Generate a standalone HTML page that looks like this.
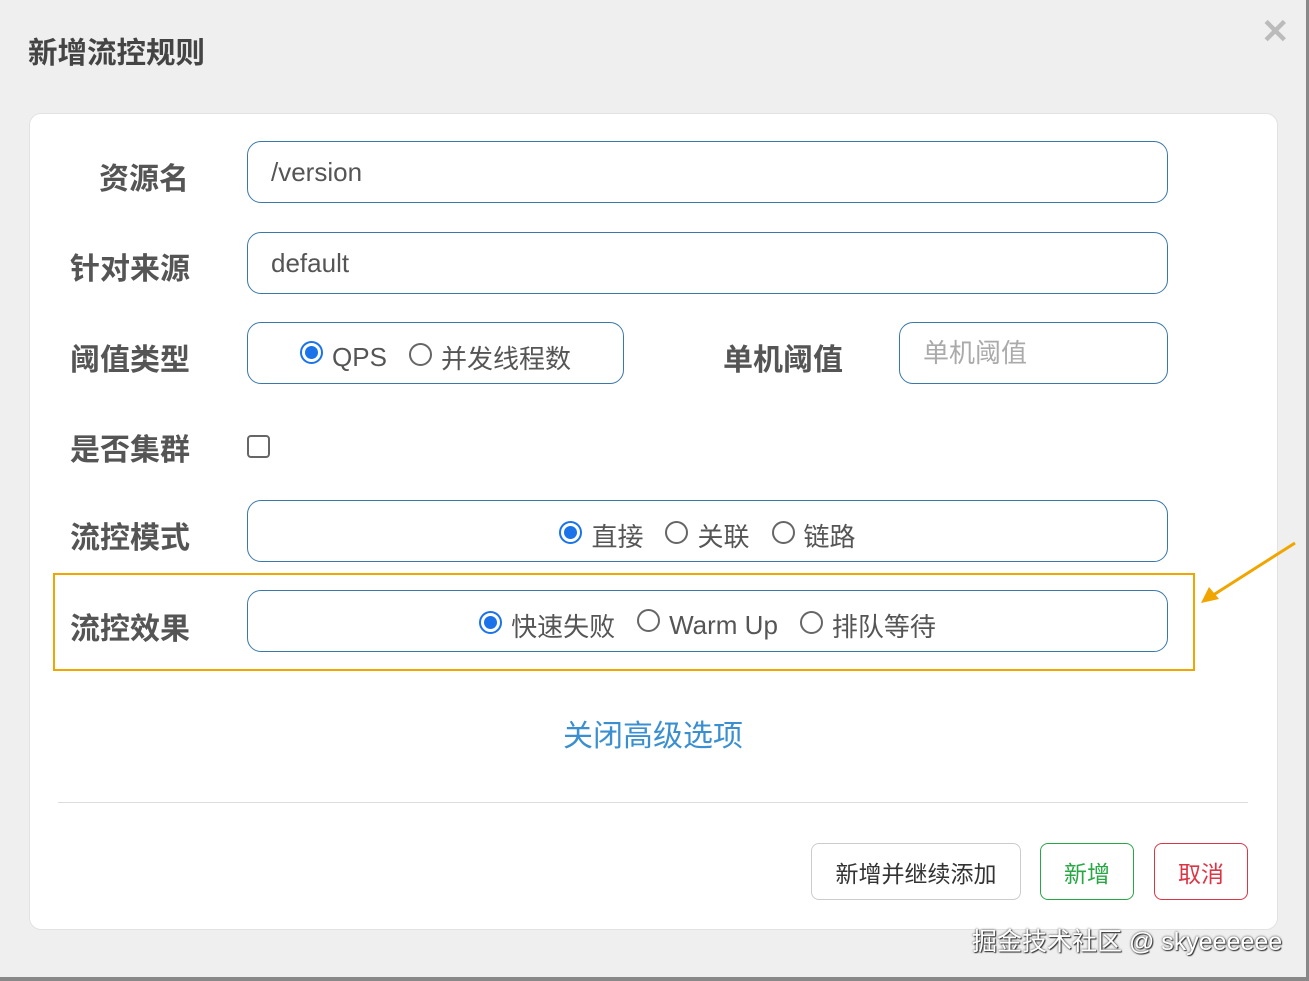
<!DOCTYPE html>
<html><head><meta charset="utf-8"><style>
*{box-sizing:border-box;margin:0;padding:0}
body{width:1309px;height:981px;background:#efefef;position:relative;overflow:hidden;font-family:"Liberation Sans","Noto Sans CJK SC",sans-serif;color:#555}
.a{position:absolute}
.title{left:28px;top:30px;font-size:29.5px;font-weight:bold;color:#444}
.card{left:29px;top:113px;width:1249px;height:817px;background:#fff;border:1px solid #e2e2e2;border-radius:12px}
.lbl{font-size:30px;font-weight:bold;color:#555;white-space:nowrap}
.box{border:1px solid #3b78aa;border-radius:14px;height:62px;font-size:26px;color:#555;display:flex;align-items:center;padding-left:23px}
.c{justify-content:center;padding-left:0;padding-top:8px}
.r{display:inline-block;width:23px;height:23px;border-radius:50%;border:2px solid #666;margin-right:9px;vertical-align:middle;position:relative;top:-6px}
.r.on{border:2px solid #1a73e8}
.r.on:after{content:"";position:absolute;left:3px;top:3px;width:13px;height:13px;border-radius:50%;background:#1a73e8}
.opt{margin:0 11px;white-space:nowrap}
.btn{height:57px;border-radius:8px;font-size:23px;display:flex;align-items:center;justify-content:center;background:#fff}
</style></head><body>
<div class="a title">新增流控规则</div>
<div class="a" style="left:1261px;top:12px;font-size:34px;color:#bbb;font-weight:bold">✕</div>
<div class="a card"></div>
<div class="a lbl" style="left:99px;top:154px">资源名</div>
<div class="a box" style="left:247px;top:141px;width:921px">/version</div>
<div class="a lbl" style="left:70px;top:244px">针对来源</div>
<div class="a box" style="left:247px;top:232px;width:921px">default</div>
<div class="a lbl" style="left:70px;top:335px">阈值类型</div>
<div class="a box c" style="left:247px;top:322px;width:377px"><span class="opt"><span class="r on"></span>QPS</span><span class="opt"><span class="r"></span>并发线程数</span></div>
<div class="a lbl" style="left:723px;top:335px">单机阈值</div>
<div class="a box" style="left:899px;top:322px;width:269px;color:#aaa;padding-bottom:4px">单机阈值</div>
<div class="a lbl" style="left:70px;top:425px">是否集群</div>
<div class="a" style="left:247px;top:435px;width:23px;height:23px;border:2px solid #666;border-radius:4px"></div>
<div class="a lbl" style="left:70px;top:513px">流控模式</div>
<div class="a box c" style="left:247px;top:500px;width:921px"><span class="opt"><span class="r on"></span>直接</span><span class="opt"><span class="r"></span>关联</span><span class="opt"><span class="r"></span>链路</span></div>
<div class="a" style="left:53px;top:573px;width:1142px;height:98px;border:2px solid #f0a500"></div>
<div class="a lbl" style="left:70px;top:604px">流控效果</div>
<div class="a box c" style="left:247px;top:590px;width:921px"><span class="opt"><span class="r on"></span>快速失败</span><span class="opt"><span class="r"></span>Warm Up</span><span class="opt"><span class="r"></span>排队等待</span></div>
<svg class="a" style="left:1195px;top:535px" width="110" height="75"><line x1="100" y1="8" x2="12" y2="64" stroke="#f0a500" stroke-width="3"/><polygon points="6,68 14,52 24,64" fill="#f0a500"/></svg>
<div class="a" style="left:563px;top:711px;font-size:30px;color:#3a8fd1">关闭高级选项</div>
<div class="a" style="left:58px;top:802px;width:1190px;height:1px;background:#ddd"></div>
<div class="a btn" style="left:811px;top:843px;width:210px;border:1px solid #ccc;color:#333">新增并继续添加</div>
<div class="a btn" style="left:1040px;top:843px;width:94px;border:1px solid #28a745;color:#28a745">新增</div>
<div class="a btn" style="left:1154px;top:843px;width:94px;border:1px solid #dc3545;color:#dc3545">取消</div>
<div class="a" style="left:972px;top:922px;font-size:25px;color:#fff;text-shadow:0 0 2px #333,1px 1px 1px #333">掘金技术社区 @ skyeeeeee</div>
<div class="a" style="left:0;top:977px;width:1309px;height:4px;background:#888"></div>
<div class="a" style="left:1306px;top:0;width:3px;height:981px;background:#888"></div>
</body></html>
